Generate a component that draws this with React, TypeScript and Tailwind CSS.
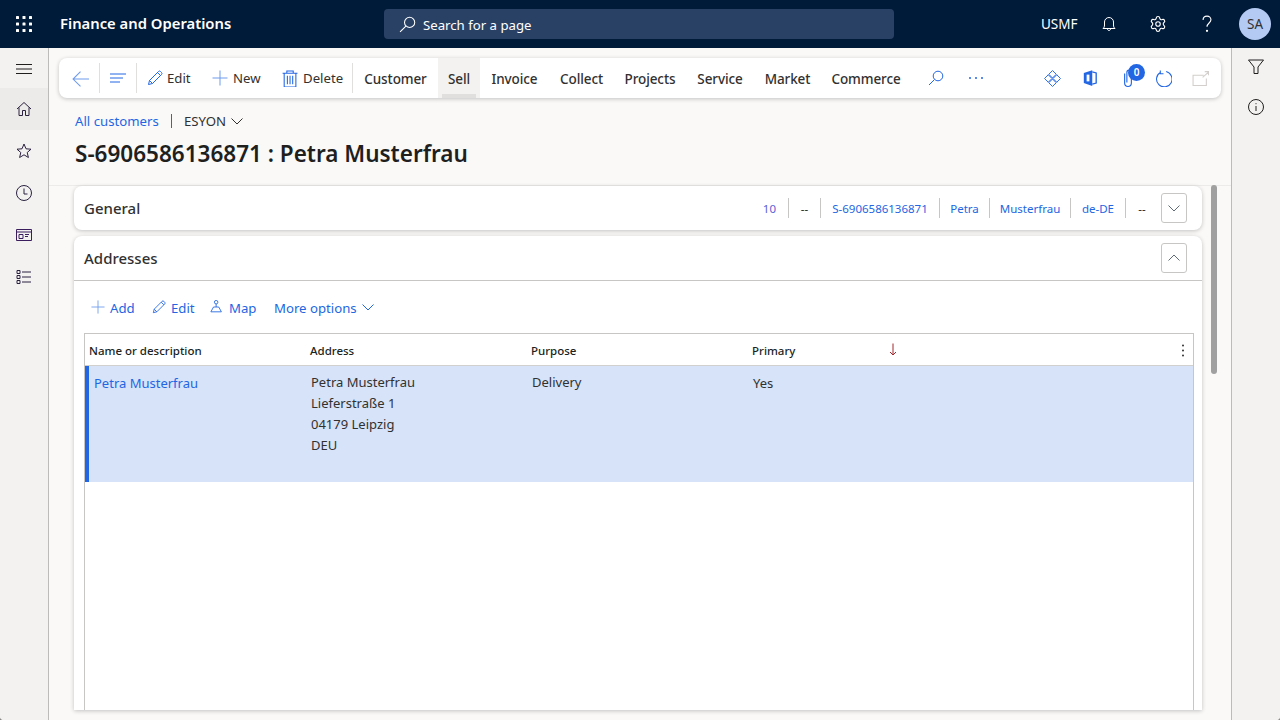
import React from "react";
import { Settings } from "lucide-react";

type IP = { size?: number; color?: string; vb?: number; children: React.ReactNode; className?: string };
const Ic = ({ size = 16, color = "#2266E3", vb = 16, children, className = "" }: IP) => (
  <svg width={size} height={size} viewBox={`0 0 ${vb} ${vb}`} fill="none" stroke={color} strokeWidth={1} className={"shrink-0 " + className}>
    {children}
  </svg>
);

const Pencil = ({ size = 16 }: { size?: number }) => (
  <Ic size={size}>
    <path d="M1.500 14.500l1-4L11.500 1.500a1.400 1.400 0 0 1 2 0l1 1a1.400 1.400 0 0 1 0 2L5.500 13.500z" />
    <path d="M2.500 10.500l3 3M10.500 2.500l3 3" />
  </Ic>
);
const Plus = ({ size = 16 }: { size?: number }) => (
  <Ic size={size} color="#6f9bed">
    <path d="M8 0.500v15M0.500 8h15" />
  </Ic>
);
const Chevron = ({ up = false, color = "#323130", size = 12 }: { up?: boolean; color?: string; size?: number }) => (
  <Ic size={size} vb={12} color={color}>
    <path d={up ? "M0.500 8.500L6 3l5.500 5.500" : "M0.500 3.500L6 9l5.500-5.500"} />
  </Ic>
);

const railIcon = "#2b2140";

const Tab = ({ w, label, active }: { w: string; label: string; active?: boolean }) => (
  <div className={`${w} h-full flex items-center justify-center relative text-[13.5px] tracking-[-0.1px] font-medium text-[#323130] ${active ? "bg-[#F3F2F1]" : ""}`}>
    <span className="pt-[2px]">{label}</span>
    {active && <div className="absolute bottom-0 left-1 right-1 h-1 bg-[#E1DFDD]" />}
  </div>
);

const Sep = () => <div className="w-px h-[30px] bg-[#E1DFDD] shrink-0" />;
const SumSep = () => <div className="w-px h-5 bg-[#C8C6C4] shrink-0" />;

const CollapseBtn = ({ up }: { up?: boolean }) => (
  <div className="w-[26px] h-[30px] border border-[#C8C6C4] rounded-[3px] flex items-center justify-center bg-white shrink-0">
    <Chevron up={up} color="#5f6b7a" />
  </div>
);

const ToolBtn = ({ w, pl, gap, icon, label }: { w: string; pl: string; gap: string; icon: React.ReactNode; label: string }) => (
  <div className={`${w} ${pl} ${gap} flex items-center h-full text-[13.2px] text-[#323130] shrink-0`}>
    {icon}
    <span className="pt-[2px]">{label}</span>
  </div>
);

export default function App() {
  return (
    <div className="w-[1280px] h-[720px] overflow-hidden bg-[#8a8886] font-['Noto_Sans','Open_Sans',sans-serif]">
      <div className="w-full h-full flex flex-col rounded-b-[4px] overflow-hidden bg-[#FAF9F8]">
        {/* Top bar */}
        <header className="h-12 shrink-0 bg-[#001A39] flex items-center text-white">
          <div className="w-12 flex justify-center">
            <svg width="16" height="16" viewBox="0 0 16 16" fill="#fff">
              {[1.5, 8, 14.5].map((y) =>
                [1.5, 8, 14.5].map((x) => <rect key={`${x}-${y}`} x={x - 1.5} y={y - 1.5} width="3" height="3" rx="0.6" />)
              )}
            </svg>
          </div>
          <div className="ml-3 w-[324px] pb-[2px] text-[14.8px] font-semibold">Finance and Operations</div>
          <div className="w-[510px] h-[30px] bg-[#2A4166] rounded-[4px] flex items-center pl-[15px] gap-[7px] text-[13.2px] text-white">
            <Ic size={17} color="#fff">
              <circle cx="10" cy="6" r="4.800" />
              <path d="M6.500 9.500L1 15" />
            </Ic>
            <span className="pt-[3px]">Search for a page</span>
          </div>
          <div className="ml-[147px] w-[37px] text-[13.5px]">USMF</div>
          <div className="ml-[21px] w-5 flex justify-center">
            <Ic size={16} color="#fff">
              <path d="M2 12.500c1.200-1 1.500-2 1.500-3.500V6a4.500 4.500 0 0 1 9 0v3c0 1.500.3 2.500 1.500 3.500z" />
              <path d="M6.500 13c0 2 3 2 3 0" />
            </Ic>
          </div>
          <div className="ml-[29px] w-5 flex justify-center">
            <Settings size={18} strokeWidth={1.5} color="#fff" />
          </div>
          <div className="ml-[29px] w-5 flex justify-center">
            <Ic size={18} color="#fff">
              <path d="M4.500 4.500C4.500 2.500 6 1 8 1s3.500 1.500 3.500 3.300c0 2.700-3.500 3-3.500 6.200" />
              <circle cx="8" cy="14" r="0.500" fill="#fff" />
            </Ic>
          </div>
          <div className="ml-[22px] w-8 h-8 rounded-full bg-[#B4CAF3] text-[#323130] text-[13.5px] flex items-center justify-center">SA</div>
        </header>

        <div className="flex-1 flex min-h-0">
          {/* Left rail */}
          <nav className="w-[49px] shrink-0 bg-[#F3F2F1] border-r border-[#BDBBB9] flex flex-col">
            <div className="h-10 flex items-center justify-center pt-[2px]">
              <Ic size={16} color="#201F1E">
                <path d="M0 3.500h16M0 8h16M0 12.500h16" />
              </Ic>
            </div>
            <div className="h-[42px] bg-[#EDEBE9] flex items-center justify-center">
              <Ic size={16} color={railIcon}>
                <path d="M1 8L8 1.500 15 8M3 6.500V14.500h3.500V9.500h3V14.500H13V6.500" />
              </Ic>
            </div>
            <div className="h-[42px] flex items-center justify-center">
              <Ic size={16} color={railIcon}>
                <path d="M8 1l2 4.800 5 .4-3.800 3.300 1.200 5L8 11.800 3.600 14.500l1.200-5L1 6.200l5-.4z" />
              </Ic>
            </div>
            <div className="h-[42px] flex items-center justify-center">
              <Ic size={16} color={railIcon}>
                <circle cx="8" cy="8" r="7.500" />
                <path d="M8 3.500V9h3.500" />
              </Ic>
            </div>
            <div className="h-[42px] flex items-center justify-center">
              <Ic size={16} color="#3a1d5c">
                <path d="M.5 2.500h15v11H.5zM.5 5h15M3 7.500h4v4H3zM9 7.500h4M9 9.500h3" />
              </Ic>
            </div>
            <div className="h-[42px] flex items-center justify-center">
              <Ic size={16} color={railIcon}>
                <path d="M1 1.500h3v3H1zM1 6.500h3v3H1zM1 11.500h3v3H1zM6 3h9M6 8h9M6 13h9" />
              </Ic>
            </div>
          </nav>

          {/* Main */}
          <main className="flex-1 min-w-0 flex flex-col">
            {/* Action bar */}
            <div className="mt-[10px] mx-[10px] h-10 shrink-0 bg-white rounded-lg shadow-[0_1px_4px_rgba(0,0,0,0.22)] flex items-center">
              <div className="w-10 h-full flex items-center justify-center pl-[2px]">
                <Ic size={17} color="#6f9bed">
                  <path d="M16 8.500H1M8 1.500l-7 7 7 7" />
                </Ic>
              </div>
              <Sep />
              <div className="w-9 h-full flex items-center justify-center pr-[1px]">
                <Ic size={16} color="#2266E3">
                  <path d="M0 4h16M0 8h13M0 12h10" />
                </Ic>
              </div>
              <Sep />
              <ToolBtn w="w-[64px]" pl="pl-[10px]" gap="gap-1" icon={<Pencil />} label="Edit" />
              <ToolBtn w="w-[71px]" pl="pl-[11px]" gap="gap-[5px]" icon={<Plus />} label="New" />
              <ToolBtn
                w="w-[80px]"
                pl="pl-[9px]"
                gap="gap-[5px]"
                icon={
                  <Ic size={17}>
                    <path d="M1.500 3h14M5.500 3V1h6v2M3 3v13h11V3M6 5.500V13.500M8.500 5.500V13.500M11 5.500V13.500" />
                  </Ic>
                }
                label="Delete"
              />
              <Sep />
              <Tab w="w-[85px]" label="Customer" />
              <Tab w="w-[42px]" label="Sell" active />
              <Tab w="w-[69px]" label="Invoice" />
              <Tab w="w-[65px]" label="Collect" />
              <Tab w="w-[72px]" label="Projects" />
              <Tab w="w-[68px]" label="Service" />
              <Tab w="w-[67px]" label="Market" />
              <Tab w="w-[90px]" label="Commerce" />
              <div className="ml-[5px] w-10 h-full flex items-center justify-center">
                <Ic size={16}>
                  <circle cx="10" cy="6" r="4.800" />
                  <path d="M6.500 9.500L1 15" />
                </Ic>
              </div>
              <div className="w-10 h-full flex items-center justify-center">
                <Ic size={16}>
                  <path d="M1 8h2M7 8h2M13 8h2" strokeWidth={1.4} />
                </Ic>
              </div>
              <div className="ml-9 w-10 h-full flex items-center justify-center">
                <Ic size={17}>
                  <path d="M8 .5l3.500 3.500L8 7.500 4.500 4zM8 8.500l3.500 3.500L8 15.500 4.500 12zM4 4.500L7.500 8 4 11.500.5 8zM12 4.500L15.500 8 12 11.500 8.500 8z" strokeWidth={0.9} />
                </Ic>
              </div>
              <div className="-ml-[2px] w-10 h-full flex items-center justify-center">
                <Ic size={18}>
                  <path d="M2.500 3.500L10 1v14l-7.500-2.500z" fill="#2266E3" stroke="none" />
                  <path d="M10 2.500l3.500 1v9l-3.500 1" strokeWidth={1.2} />
                  <path d="M5 5h2.500v6H5z" fill="#fff" stroke="none" />
                </Ic>
              </div>
              <div className="-ml-[2px] w-10 h-full flex items-center justify-center relative">
                <Ic size={18}>
                  <path d="M5 4v8.500a3 3 0 0 0 6 0V3a2 2 0 0 0-4 0v9" />
                </Ic>
                <div className="absolute left-[20px] top-[6px] w-[17px] h-[17px] rounded-full bg-[#2266E3] text-white text-[10px] font-semibold flex items-center justify-center">0</div>
              </div>
              <div className="-ml-[5px] w-10 h-full flex items-center justify-center">
                <Ic size={17}>
                  <path d="M5 2.300A7.300 7.300 0 1 0 10.500 1.500M5 .5v3h3" />
                </Ic>
              </div>
              <div className="-ml-[3px] w-10 h-full flex items-center justify-center">
                <Ic size={17} color="#D2CFCC">
                  <path d="M11 5H1v9.500h12.500V8M10 7l5.500-5M12 1.500h3.500V5" />
                </Ic>
              </div>
            </div>

            {/* Breadcrumb */}
            <div className="ml-[26px] mt-[13px] h-[20px] flex items-center text-[13.2px] shrink-0">
              <span className="text-[#2266E3] w-[96px] pt-[2px]">All customers</span>
              <div className="w-px h-[14px] bg-[#2266E3]" />
              <span className="ml-3 text-[#323130] w-[47px] pt-[2px]">ESYON</span>
              <Chevron color="#323130" />
            </div>
            <h1 className="ml-[26px] mt-[6px] h-[34px] shrink-0 text-[22.5px] leading-[34px] font-semibold text-[#201F1E]">
              S-6906586136871 : Petra Musterfrau
            </h1>

            {/* Scroll region */}
            <div className="mt-[14px] border-t border-[#EDEBE9] flex flex-1 min-h-0 bg-[#FAF9F8] mb-[10px] pl-[25px]">
              <div className="w-[1128px] flex flex-col gap-[6px]">
                <section className="h-11 shrink-0 bg-white rounded-lg shadow-[0_1px_4px_rgba(0,0,0,0.22)] flex items-center pl-[10px] pr-[15px]">
                  <h2 className="text-[15px] font-medium text-[#323130]">General</h2>
                  <div className="ml-auto flex items-center text-[11.5px] text-[#2266E3]">
                    <span className="w-[26px] text-right pr-3 pt-px text-[#5B5FD6]">10</span>
                    <SumSep />
                    <span className="w-[31px] text-center text-[#201F1E] pt-px">--</span>
                    <SumSep />
                    <span className="w-[118px] text-center pt-px">S-6906586136871</span>
                    <SumSep />
                    <span className="w-[49px] text-center pt-px">Petra</span>
                    <SumSep />
                    <span className="w-[80px] text-center pt-px">Musterfrau</span>
                    <SumSep />
                    <span className="w-[54px] text-center pt-px">de-DE</span>
                    <SumSep />
                    <span className="w-[35px] pr-[3px] text-center text-[#201F1E] pt-px">--</span>
                    <CollapseBtn />
                  </div>
                </section>
                <section className="flex-1 min-h-0 bg-white rounded-t-lg shadow-[0_1px_4px_rgba(0,0,0,0.22)] flex flex-col">
                  <div className="h-[45px] shrink-0 border-b border-[#C8C6C4] flex items-center pl-[10px] pr-[15px]">
                    <h2 className="text-[15px] font-medium text-[#323130]">Addresses</h2>
                    <div className="ml-auto"><CollapseBtn up /></div>
                  </div>
                  <div className="h-[52px] shrink-0 flex items-center text-[13.2px] text-[#2266E3] pl-[17px]">
                    <div className="w-[61px] flex items-center gap-[5px]"><Plus size={14} /><span className="pt-[3px]">Add</span></div>
                    <div className="w-[58px] flex items-center gap-[5px]"><Pencil size={14} /><span className="pt-[3px]">Edit</span></div>
                    <div className="w-[64px] flex items-center gap-[5px]">
                      <Ic size={14}>
                        <circle cx="7" cy="2.500" r="2" />
                        <path d="M7 4.500V8M4 8h6l3 5.500H1z" />
                      </Ic>
                      <span className="pt-[3px]">Map</span>
                    </div>
                    <div className="flex items-center">
                      <span className="w-[88px] pt-[3px]">More options</span>
                      <Chevron color="#2266E3" />
                    </div>
                  </div>
                  <div className="ml-[10px] mr-[8px] flex-1 min-h-0 border border-b-0 border-[#C8C6C4] flex flex-col">
                    <div className="h-[32px] shrink-0 border-b border-[#D2D0CE] grid grid-cols-[221px_221px_221px_221px_1fr] items-center text-[11.5px] font-medium text-[#201F1E] pl-[4px] pt-[2px] relative">
                      <div>Name or description</div>
                      <div>Address</div>
                      <div>Purpose</div>
                      <div>Primary</div>
                      <div />
                      <svg className="absolute left-[804px] top-[9px]" width="8" height="13" viewBox="0 0 8 13" fill="none" stroke="#A4262C">
                        <path d="M4 0.500V12M1 9l3 3 3-3" />
                      </svg>
                      <svg className="absolute left-[1096px] top-[10px]" width="4" height="13" viewBox="0 0 4 13" fill="#323130">
                        <circle cx="2" cy="1.500" r="1" />
                        <circle cx="2" cy="6.500" r="1" />
                        <circle cx="2" cy="11.500" r="1" />
                      </svg>
                    </div>
                    <div className="h-[116px] shrink-0 bg-[#D6E3F9] border-l-4 border-[#2266E3] grid grid-cols-[222px_221px_221px_1fr] text-[13px] leading-[21px] text-[#323130] pt-[6px]">
                      <div className="pl-[5px] pt-px text-[#2266E3]">Petra Musterfrau</div>
                      <div>
                        <div>Petra Musterfrau</div>
                        <div>Lieferstraße 1</div>
                        <div>04179 Leipzig</div>
                        <div>DEU</div>
                      </div>
                      <div>Delivery</div>
                      <div className="pt-px">Yes</div>
                    </div>
                  </div>
                </section>
              </div>
              <div className="ml-[9px] -mt-px w-[6px] h-[189px] rounded-full bg-[#A0A0A0] shrink-0" />
            </div>
          </main>

          {/* Right rail */}
          <aside className="w-[49px] shrink-0 bg-[#F3F2F1] border-l border-[#BDBBB9] flex flex-col items-center pt-[11px] gap-6">
            <Ic size={16} color="#201F1E">
              <path d="M.5 1h15L10 8v6.500H6V8z" />
            </Ic>
            <Ic size={16} color="#201F1E">
              <circle cx="8" cy="8" r="7.500" />
              <path d="M8 7v5M8 4.200v1" />
            </Ic>
          </aside>
        </div>
      </div>
    </div>
  );
}
